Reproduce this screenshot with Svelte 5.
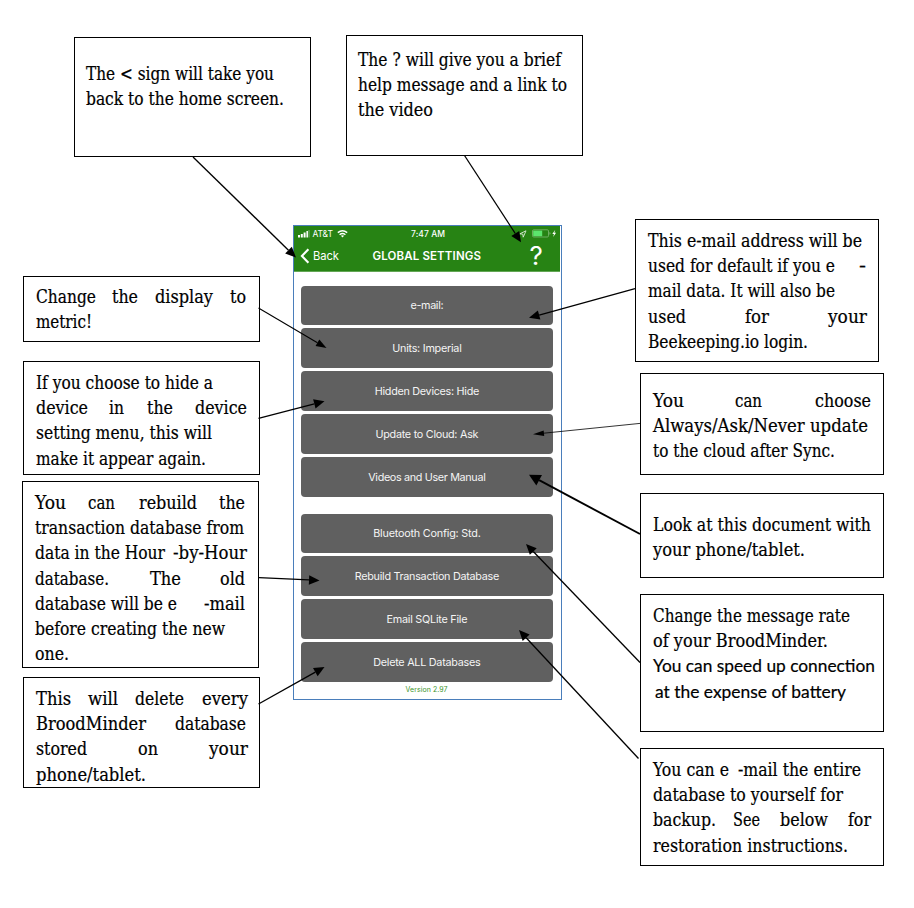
<script>
  // Each callout: frame, first baseline, inset, and lines of [text, start, end] segments.
  const callouts = [
    { x: 74, y: 37, w: 237, h: 120, base: 80, lines: [
      [['The < sign will take you', 86, 274]],
      [['back to the home screen.', 86, 284]]] },
    { x: 346, y: 35, w: 237, h: 121, base: 66, lines: [
      [['The ? will give you a brief', 358, 561]],
      [['help message and a link to', 358, 567]],
      [['the video', 358, 433]]] },
    { x: 23, y: 276, w: 237, h: 66, base: 303, lines: [
      [['Change', 36, 96], ['the', 112, 138], ['display', 155, 213], ['to', 230, 246]],
      [['metric!', 36, 92]]] },
    { x: 23, y: 361, w: 237, h: 114, base: 389, lines: [
      [['If you choose to hide a', 36, 213]],
      [['device', 36, 88], ['in', 109, 124], ['the', 147, 173], ['device', 195, 247]],
      [['setting menu, this will', 36, 212]],
      [['make it appear again.', 36, 206]]] },
    { x: 22, y: 481, w: 237, h: 187, base: 509, lines: [
      [['You', 35, 66], ['can', 88, 115], ['rebuild', 139, 197], ['the', 219, 245]],
      [['transaction database from', 35, 244]],
      [['data in the Hour', 35, 165], ['-by-Hour', 173, 247]],
      [['database.', 35, 109], ['The', 150, 181], ['old', 220, 245]],
      [['database will be e', 35, 177], ['-mail', 204, 245]],
      [['before creating the new', 35, 225]],
      [['one.', 35, 69]]] },
    { x: 23, y: 677, w: 237, h: 111, base: 705, lines: [
      [['This', 36, 71], ['will', 88, 118], ['delete', 135, 184], ['every', 202, 248]],
      [['BroodMinder', 36, 146], ['database', 175, 246]],
      [['stored', 36, 87], ['on', 138, 158], ['your', 209, 248]],
      [['phone/tablet.', 36, 146]]] },
    { x: 635, y: 219, w: 244, h: 143, base: 247, lines: [
      [['This e-mail address will be', 648, 862]],
      [['used for default if you e', 648, 835], ['-', 859, 866]],
      [['mail data. It will also be', 648, 835]],
      [['used', 648, 686], ['for', 745, 769], ['your', 828, 867]],
      [['Beekeeping.io login.', 648, 808]]] },
    { x: 640, y: 373, w: 244, h: 102, base: 407, lines: [
      [['You', 653, 684], ['can', 735, 762], ['choose', 815, 871]],
      [['Always/Ask/Never update', 653, 868]],
      [['to the cloud after Sync.', 653, 835]]] },
    { x: 640, y: 493, w: 244, h: 85, base: 531, lines: [
      [['Look at this document with', 653, 871]],
      [['your phone/tablet.', 653, 805]]] },
    { x: 640, y: 594, w: 244, h: 138, base: 622, lines: [
      [['Change the message rate', 653, 850]],
      [['of your BroodMinder.', 653, 828]],
      [['You can speed up connection', 653, 875, 'sans']],
      [['at the expense of battery', 655, 846, 'sans']]] },
    { x: 640, y: 748, w: 244, h: 118, base: 776, lines: [
      [['You can e', 653, 729], ['-mail the entire', 738, 861]],
      [['database to yourself for', 653, 843]],
      [['backup.', 653, 716], ['See', 733, 760], ['below', 780, 828], ['for', 848, 871]],
      [['restoration instructions.', 653, 848]]] }
  ];

  const groups = [
    [['e-mail:', 33], ['Units: Imperial', 69.5], ['Hidden Devices: Hide', 104.5], ['Update to Cloud: Ask', 103], ['Videos and User Manual', 117.5]],
    [['Bluetooth Config: Std.', 107.5], ['Rebuild Transaction Database', 144.5], ['Email SQLite File', 81], ['Delete ALL Databases', 107.5]]
  ];

  // [tail x, tail y, tip x, tip y, line width, head length, head width]
  const arrows = [
    [193, 157, 296, 257.5, 1.3, 10.5, 9.5],
    [464.5, 155.5, 521, 242.3, 1.3, 10.5, 9.5],
    [635, 288.7, 529, 317.8, 1.3, 10.5, 9.5],
    [258.5, 308, 326.5, 348, 1.1, 10.5, 7.5],
    [258.5, 418.3, 324.5, 401.2, 1.3, 10.5, 9.5],
    [640, 423.4, 533, 434.3, 0.8, 11, 5.5],
    [640, 534, 529, 474.8, 1.9, 11.5, 12],
    [640, 662.5, 526, 544, 1.3, 10.5, 9.5],
    [259, 577.7, 319.5, 580.4, 1.3, 10.5, 9.5],
    [638.5, 758.5, 519, 630, 1.3, 10.5, 9.5],
    [258.5, 704, 324.5, 667, 1.3, 10.5, 9.5]
  ].map(([x1, y1, x2, y2, sw, len, wid]) => {
    const d = Math.hypot(x2 - x1, y2 - y1);
    const ux = (x2 - x1) / d, uy = (y2 - y1) / d;
    const bx = x2 - ux * len, by = y2 - uy * len;
    const h = wid / 2;
    return { x1, y1, bx, by, sw, head: `${x2},${y2} ${bx - uy * h},${by + ux * h} ${bx + uy * h},${by - ux * h}` };
  });

  // Tracks a run of text so that it spans the given width.
  function fit(node, width) {
    const natural = node.getBoundingClientRect().width;
    const n = node.textContent.length;
    const gap = (width - natural) / Math.max(1, n - 1);
    node.style.letterSpacing = gap + 'px';
    node.style.marginRight = -gap + 'px';
  }

  // Condenses a run of text horizontally to the given width.
  function condense(node, width) {
    const natural = node.getBoundingClientRect().width;
    node.style.transform = `scaleX(${width / natural})`;
  }
</script>

<main>
  <section class="phone">
    <header>
      <div class="status">
        <svg class="bars" width="12" height="8" viewBox="0 0 12 8" fill="#fff">
          <rect x="0" y="5" width="2" height="2.5" /><rect x="2.8" y="4" width="2" height="3.5" />
          <rect x="5.6" y="2.5" width="2" height="5" /><rect x="8.4" y="1" width="1.6" height="6.5" opacity=".95" />
          <rect x="10.6" y="0" width=".8" height="7.5" opacity=".5" />
        </svg>
        <span class="carrier"><span use:fit={20.5}>AT&amp;T</span></span>
        <svg class="wifi" width="11" height="8" viewBox="0 0 11 8" fill="none" stroke="#fff">
          <path d="M.8 2.7Q5.5-1 10.2 2.7" stroke-width="1.5" /><path d="M2.6 4.7Q5.5 2.4 8.4 4.7" stroke-width="1.4" />
          <path d="M3.9 5.8Q5.5 4.5 7.1 5.8L5.5 7.6Z" fill="#fff" stroke="none" />
        </svg>
        <span class="time"><span use:fit={34}>7:47 AM</span></span>
        <svg class="loc" width="8" height="8" viewBox="0 0 8 8"><path d="M.7 3.9 7 .8 4.2 7.2 3.8 4.1Z" fill="none" stroke="#dcebd8" stroke-width=".9" /></svg>
        <svg class="battery" width="26" height="9" viewBox="0 0 26 9">
          <rect x=".5" y=".8" width="16" height="7.2" rx="1.2" fill="none" stroke="#7fb874" stroke-width=".8" />
          <rect x="1.2" y="1.6" width="9" height="5.6" fill="#5be56c" />
          <path d="M17.5 3v2.8q1-.4 1-1.4t-1-1.4" fill="#7fb874" />
          <path d="M23.3.8 20.3 4.9h1.7L21.1 8l3-4.2h-1.8Z" fill="#fff" />
        </svg>
      </div>
      <div class="nav">
        <svg width="10" height="16" viewBox="0 0 10 16"><path d="M8.4 1.2 1.9 8l6.5 6.8" fill="none" stroke="#fff" stroke-width="2.1" /></svg>
        <span class="back"><span use:fit={26}>Back</span></span>
        <span class="title"><span use:fit={108.5}>GLOBAL SETTINGS</span></span>
        <span class="help">?</span>
      </div>
    </header>
    <div class="body">
      {#each groups as group}
        <div class="group">
          {#each group as [label, width]}
            <button type="button"><span use:fit={width}>{label}</span></button>
          {/each}
        </div>
      {/each}
      <p class="version"><span use:fit={42}>Version 2.97</span></p>
    </div>
  </section>

  {#each callouts as c}
    <article style:left="{c.x}px" style:top="{c.y}px" style:width="{c.w}px" style:height="{c.h}px" style:padding-top="{c.base - c.y - 20}px">
      {#each c.lines as line}
        <div class="line">
          {#each line as [text, from, to, face], i}
            <span class="run {face ?? ''}" style:width="{to - from}px" style:margin-left="{from - (i ? line[i - 1][2] : c.x + 1)}px"><span class="fitted" use:condense={to - from}>{text}</span></span>
          {/each}
        </div>
      {/each}
    </article>
  {/each}

  <svg class="arrows" width="914" height="908" viewBox="0 0 914 908">
    {#each arrows as a}
      <line x1={a.x1} y1={a.y1} x2={a.bx} y2={a.by} stroke="#000" stroke-width={a.sw} />
      <polygon points={a.head} />
    {/each}
  </svg>
</main>

<style>
  :global(body) { margin: 0; background: #fff; }
  main { position: relative; width: 914px; height: 908px; overflow: hidden; background: #fff; }
  span { white-space: pre; }
  svg { display: block; flex: none; }

  .phone {
    position: absolute; left: 293px; top: 225px; width: 269px; height: 475px; box-sizing: border-box;
    border: 1px solid #4a7ebb; background: #fff; font-family: Inter, sans-serif; color: #fff;
  }
  header { width: 266px; height: 46px; background: #278314; box-sizing: border-box; border-bottom: 1px solid #63a755; }
  .status { display: flex; align-items: center; height: 15px; padding-left: 4px; font-size: 8.5px; }
  .carrier { width: 21px; margin-left: 2.5px; }
  .wifi { margin-left: 3.5px; }
  .time { width: 34px; margin-left: 63px; font-weight: 500; }
  .loc { margin-left: 74px; }
  .battery { margin-left: 4.5px; }
  .nav { display: flex; align-items: center; height: 29px; padding-left: 6px; }
  .back { width: 26px; margin-left: 3px; font-size: 11.2px; }
  .title { width: 108.5px; margin-left: 33.5px; font-size: 11.5px; font-weight: 600; }
  .help { margin-left: 48.5px; font-size: 26px; line-height: 29px; }

  .body { padding: 13.6px 7px 0; }
  .group { display: flex; flex-direction: column; gap: 3.5px; margin-bottom: 17px; }
  button {
    display: flex; align-items: center; justify-content: center; box-sizing: border-box; width: 252px; height: 39.4px; padding: 1px 0 0;
    border: 0; border-radius: 4px; background: #606060; color: #f4f4f4; font: 10.8px Inter, sans-serif;
  }
  .version { margin: -14px 2px 0 0; text-align: center; font-size: 7px; line-height: 10px; color: #3d962c; }

  article { position: absolute; box-sizing: border-box; border: 1px solid #000; background: #fff; }
  .line { display: flex; height: 25.2px; line-height: 26px; font-family: "DejaVu Serif Condensed", "DejaVu Serif", serif; font-stretch: condensed; font-size: 17.8px; color: #000; -webkit-text-stroke: 0.2px #000; }
  .run { display: block; flex: none; }
  .fitted { display: inline-block; transform-origin: 0 50%; }
  .sans { font-family: Lato, sans-serif; font-size: 17.8px; line-height: 25px; }
  .arrows { position: absolute; left: 0; top: 0; pointer-events: none; }
</style>
